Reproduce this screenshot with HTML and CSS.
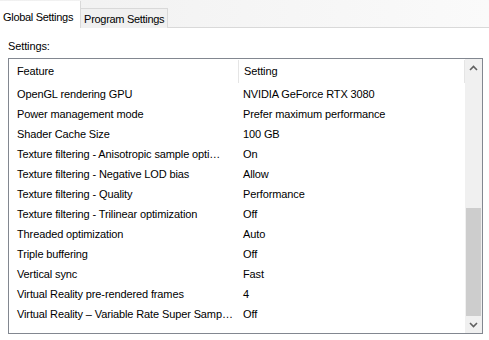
FILE: index.html
```html
<!DOCTYPE html>
<html>
<head>
  <title>Settings</title>
  <link rel="stylesheet" href="styles.css">
</head>
<body>
  <div class="tab-bar">
    <div class="tab active">Global Settings</div>
    <div class="tab">Program Settings</div>
  </div>

  <div class="page">
    <div class="label">Settings:</div>
    <div class="list-box">
      <div class="list-main">
        <div class="row head">
          <div class="cell feature">Feature</div>
          <div class="cell setting">Setting</div>
        </div>
        <div class="row"><div class="cell feature">OpenGL rendering GPU</div><div class="cell setting">NVIDIA GeForce RTX 3080</div></div>
        <div class="row"><div class="cell feature">Power management mode</div><div class="cell setting">Prefer maximum performance</div></div>
        <div class="row"><div class="cell feature">Shader Cache Size</div><div class="cell setting">100 GB</div></div>
        <div class="row"><div class="cell feature">Texture filtering - Anisotropic sample opti…</div><div class="cell setting">On</div></div>
        <div class="row"><div class="cell feature">Texture filtering - Negative LOD bias</div><div class="cell setting">Allow</div></div>
        <div class="row"><div class="cell feature">Texture filtering - Quality</div><div class="cell setting">Performance</div></div>
        <div class="row"><div class="cell feature">Texture filtering - Trilinear optimization</div><div class="cell setting">Off</div></div>
        <div class="row"><div class="cell feature">Threaded optimization</div><div class="cell setting">Auto</div></div>
        <div class="row"><div class="cell feature">Triple buffering</div><div class="cell setting">Off</div></div>
        <div class="row"><div class="cell feature">Vertical sync</div><div class="cell setting">Fast</div></div>
        <div class="row"><div class="cell feature">Virtual Reality pre-rendered frames</div><div class="cell setting">4</div></div>
        <div class="row"><div class="cell feature">Virtual Reality – Variable Rate Super Samp…</div><div class="cell setting">Off</div></div>
      </div>
      <div class="scrollbar">
        <div class="arrow">
          <svg width="9" height="6" viewBox="0 0 9 6"><path d="M1 5 L4.5 1.5 L8 5" fill="none" stroke="#606060" stroke-width="1.6"/></svg>
        </div>
        <div class="track">
          <div class="thumb"></div>
        </div>
        <div class="arrow">
          <svg width="9" height="6" viewBox="0 0 9 6"><path d="M1 1 L4.5 4.5 L8 1" fill="none" stroke="#606060" stroke-width="1.6"/></svg>
        </div>
      </div>
    </div>
  </div>
</body>
</html>
```

FILE: styles.css
```css
body {
  margin: 0;
  padding: 0;
  font-family: "Liberation Sans", Arial, sans-serif;
  font-size: 11px;
  letter-spacing: -0.12px;
  color: #000;
  background-color: #fff;
}

.tab-bar {
  display: flex;
  align-items: flex-end;
  height: 27px;
  background: linear-gradient(to right, #f0f0f0, #fafafa);
  border-bottom: 1px solid #d9d9d9;
}

.tab {
  height: 19px;
  line-height: 20px;
  padding: 0 3px 0 3px;
  margin-bottom: -1px;
  background-color: #f0f0f0;
  border: 1px solid #d9d9d9;
  border-bottom: none;
  letter-spacing: -0.3px;
}

.tab.active {
  height: 27px;
  line-height: 32px;
  padding: 0 7px 0 3px;
  background-color: #fff;
  border-left: none;
  border-top: none;
}

.tab.active + .tab {
  border-left: none;
}

.page {
  padding: 12px 6px 6px 8px;
}

.label {
  height: 18px;
}

.list-box {
  display: flex;
  height: 274px;
  border: 1px solid #828790;
}

.list-main {
  flex: 1;
  overflow: hidden;
}

.row {
  display: flex;
  height: 20px;
  line-height: 20px;
}

.row.head {
  height: 25px;
  line-height: 25px;
}

.cell {
  white-space: nowrap;
  overflow: hidden;
}

.feature {
  width: 221px;
  padding-left: 8px;
  flex-shrink: 0;
}

.setting {
  flex: 1;
  padding-left: 5px;
}

.head .feature {
  border-right: 1px solid #e5e5e5;
}

.head .setting {
  border-right: 1px solid #e5e5e5;
}

.head .cell {
  margin: 1px 0 1px;
  line-height: 23px;
}

.scrollbar {
  display: flex;
  flex-direction: column;
  width: 17px;
  background-color: #f0f0f0;
}

.arrow {
  height: 17px;
  display: flex;
  align-items: center;
  justify-content: center;
}

.track {
  flex: 1;
  display: flex;
  flex-direction: column;
  justify-content: flex-end;
}

.thumb {
  height: 108px;
  margin: 0 1px;
  background-color: #cdcdcd;
}
```
